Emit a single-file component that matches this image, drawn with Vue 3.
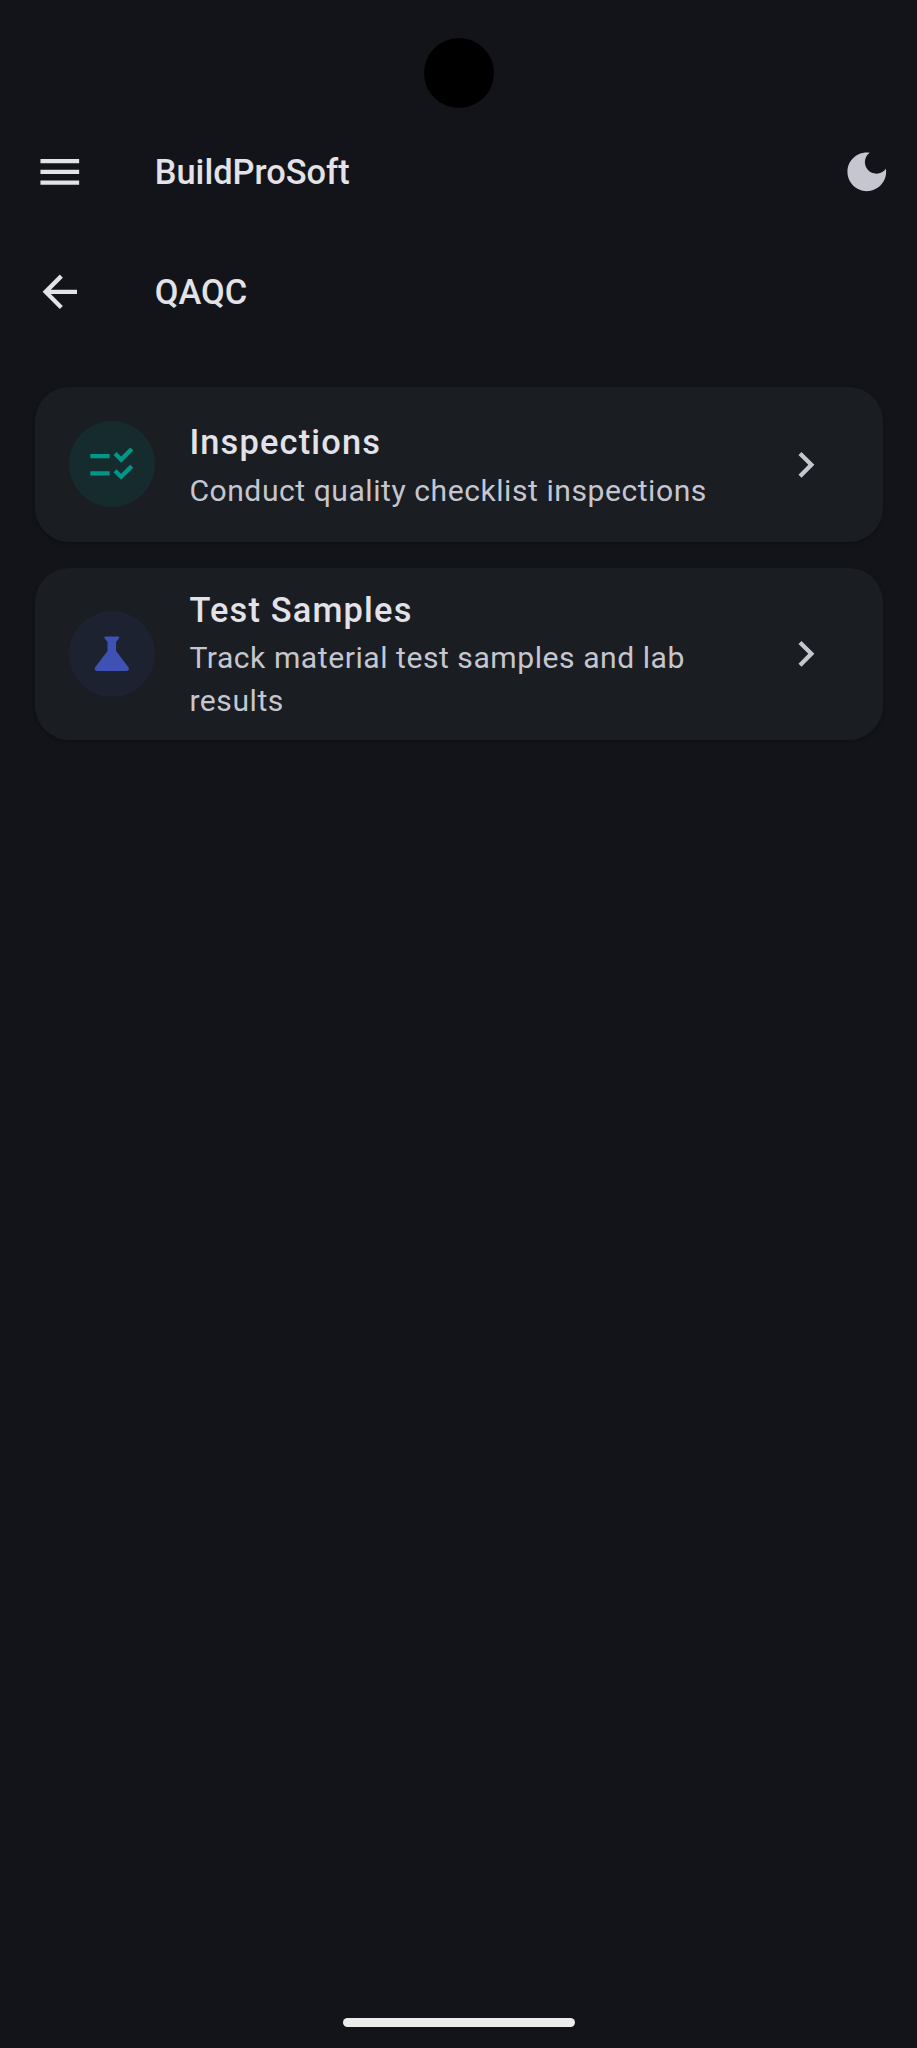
<script setup>
const items = [
  {
    title: 'Inspections',
    sub: 'Conduct quality checklist inspections',
    tone: 'teal',
    path: 'M11 7H2v2h9V7zm0 8H2v2h9v-2zm5.34-4L12.8 7.46l1.41-1.41 2.12 2.12 4.24-4.24L22 5.34 16.34 11zm0 8-3.54-3.54 1.41-1.41 2.12 2.12 4.24-4.24L22 13.34 16.34 19z'
  },
  {
    title: 'Test Samples',
    sub: 'Track material test samples and lab results',
    tone: 'indigo',
    path: 'M19.8 18.4 14 10.67V6.5l1.35-1.69c.26-.33.03-.81-.39-.81H9.04c-.42 0-.65.48-.39.81L10 6.5v4.17L4.2 18.4c-.49.66-.02 1.6.8 1.6h14c.82 0 1.29-.94.8-1.6z'
  }
]
</script>

<template>
  <div class="screen">
    <div class="camera"></div>
    <header class="bar top">
      <svg class="icon" viewBox="0 0 24 24"><path d="M3 18h18v-2H3v2zm0-5h18v-2H3v2zm0-7v2h18V6H3z" /></svg>
      <span class="bar-title">BuildProSoft</span>
      <svg class="icon moon" viewBox="0 0 24 24"><path d="M12 3c-4.97 0-9 4.03-9 9s4.03 9 9 9 9-4.03 9-9c0-.46-.04-.92-.1-1.36-.98 1.37-2.58 2.26-4.4 2.26-2.98 0-5.4-2.42-5.4-5.4 0-1.81.89-3.42 2.26-4.4-.44-.06-.9-.1-1.36-.1z" /></svg>
    </header>
    <div class="bar">
      <svg class="icon" viewBox="0 0 24 24"><path d="M20 11H7.83l5.59-5.59L12 4l-8 8 8 8 1.41-1.41L7.83 13H20v-2z" /></svg>
      <span class="bar-title">QAQC</span>
    </div>
    <main class="list">
      <article v-for="item in items" :key="item.title" class="card">
        <div class="badge" :class="item.tone">
          <svg class="icon" viewBox="0 0 24 24"><path :d="item.path" /></svg>
        </div>
        <div class="text">
          <div class="title">{{ item.title }}</div>
          <div class="sub">{{ item.sub }}</div>
        </div>
        <svg class="icon chevron" viewBox="0 0 24 24"><path d="M10 6 8.59 7.41 13.17 12l-4.58 4.59L10 18l6-6z" /></svg>
      </article>
    </main>
    <div class="home"></div>
  </div>
</template>

<style>
html, body { margin: 0; background: #121419; }
</style>

<style scoped>
.screen {
  position: relative;
  width: 917px;
  height: 2048px;
  padding-top: 112px;
  box-sizing: border-box;
  background: #121419;
  color: #e2e2e8;
  font-family: Roboto, "Liberation Sans", sans-serif;
  overflow: hidden;
}
.camera {
  position: absolute;
  left: 424px;
  top: 38px;
  width: 70px;
  height: 70px;
  border-radius: 50%;
  background: #000;
}
.home {
  position: absolute;
  left: 343px;
  top: 2018px;
  width: 232px;
  height: 8.6px;
  border-radius: 5px;
  background: #ececec;
}
.bar {
  display: flex;
  align-items: center;
  height: 120px;
  padding: 0 24.2px 0 34.4px;
}
.icon {
  flex: none;
  width: 51.6px;
  height: 51.6px;
  fill: currentColor;
}
.bar-title {
  margin-left: 68.8px;
  padding-top: 1.5px;
  font-size: 34.4px;
  font-weight: 500;
  line-height: 1.2;
}
.moon {
  margin-left: auto;
  color: #c5c6d0;
}
.list {
  display: flex;
  flex-direction: column;
  gap: 25.8px;
  padding: 35px 34px 0 34.6px;
}
.card {
  display: flex;
  align-items: center;
  box-sizing: border-box;
  min-height: 154.8px;
  padding: 17.2px 51.6px 17.2px 34.4px;
  border-radius: 34.4px;
  background: #1a1d22;
  box-shadow: 0 2px 4px rgba(0, 0, 0, 0.2);
}
.badge {
  flex: none;
  display: flex;
  align-items: center;
  justify-content: center;
  width: 86px;
  height: 86px;
  border-radius: 50%;
}
.teal {
  color: #009688;
  background: rgba(0, 150, 136, 0.12);
}
.indigo {
  color: #3f51b5;
  background: rgba(63, 81, 181, 0.1);
}
.text {
  flex: 1;
  min-width: 0;
  margin: 0 34.4px;
}
.title {
  font-size: 34.4px;
  font-weight: 500;
  line-height: 51.6px;
  letter-spacing: 1.18px;
}
.sub {
  font-size: 30.1px;
  line-height: 43px;
  letter-spacing: 0.54px;
  color: #c5c6d0;
}
.chevron {
  color: #c5c6d0;
}
</style>
